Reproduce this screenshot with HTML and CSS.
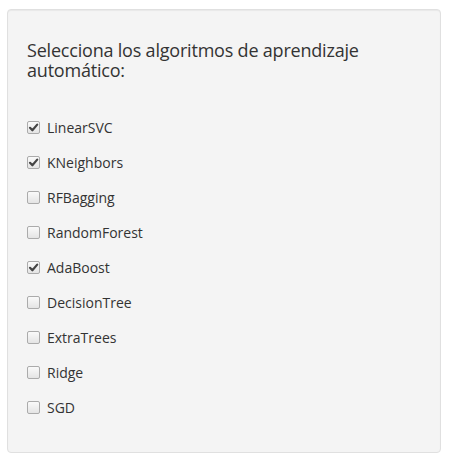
FILE: index.html
```html
<!DOCTYPE html>
<html lang="es">
<head>
<meta charset="utf-8">
<title>Algoritmos</title>
<link rel="stylesheet" href="styles.css">
</head>
<body>
<div class="well">
  <h4 class="title">Selecciona los algoritmos de aprendizaje automático:</h4>
  <div class="options">
    <label class="opt"><span class="cb checked"><svg viewBox="0 0 13 13" width="13" height="13"><path d="M3 6.8 L5.4 9.3 L10.2 3.6" /></svg></span><span class="txt">LinearSVC</span></label>
    <label class="opt"><span class="cb checked"><svg viewBox="0 0 13 13" width="13" height="13"><path d="M3 6.8 L5.4 9.3 L10.2 3.6" /></svg></span><span class="txt">KNeighbors</span></label>
    <label class="opt"><span class="cb"></span><span class="txt">RFBagging</span></label>
    <label class="opt"><span class="cb"></span><span class="txt">RandomForest</span></label>
    <label class="opt"><span class="cb checked"><svg viewBox="0 0 13 13" width="13" height="13"><path d="M3 6.8 L5.4 9.3 L10.2 3.6" /></svg></span><span class="txt">AdaBoost</span></label>
    <label class="opt"><span class="cb"></span><span class="txt">DecisionTree</span></label>
    <label class="opt"><span class="cb"></span><span class="txt">ExtraTrees</span></label>
    <label class="opt"><span class="cb"></span><span class="txt">Ridge</span></label>
    <label class="opt"><span class="cb"></span><span class="txt">SGD</span></label>
  </div>
</div>
</body>
</html>
```
FILE: styles.css
```css
html, body {
  margin: 0;
  padding: 0;
  background: #ffffff;
}
body {
  font-family: "Open Sans", "Noto Sans", "DejaVu Sans", sans-serif;
  color: #333333;
}
.well {
  margin: 9px 12px 0 7px;
  padding: 19px 19px 27px 19px;
  background: #f4f4f4;
  border: 1px solid #e0e0e0;
  border-radius: 4px;
  box-shadow: inset 0 1px 1px rgba(0, 0, 0, 0.05);
}
.title {
  margin: 11px 0 0 0;
  font-size: 18px;
  line-height: 20px;
  font-weight: 400;
  letter-spacing: -0.2px;
  color: #333333;
  max-width: 360px;
}
.options {
  margin-top: 30px;
  display: flex;
  flex-direction: column;
}
.opt {
  display: flex;
  align-items: center;
  height: 35px;
  font-size: 14px;
}
.cb {
  width: 11px;
  height: 11px;
  border: 1px solid #ababab;
  border-radius: 2px;
  background: linear-gradient(#fafafa, #e4e4e4);
  margin-right: 7px;
  position: relative;
  flex: none;
}
.cb svg {
  position: absolute;
  left: -1px;
  top: -1px;
}
.cb svg path {
  fill: none;
  stroke: #444444;
  stroke-width: 2.2;
  stroke-linecap: round;
  stroke-linejoin: round;
}
.txt {
  line-height: 20px;
}
```
